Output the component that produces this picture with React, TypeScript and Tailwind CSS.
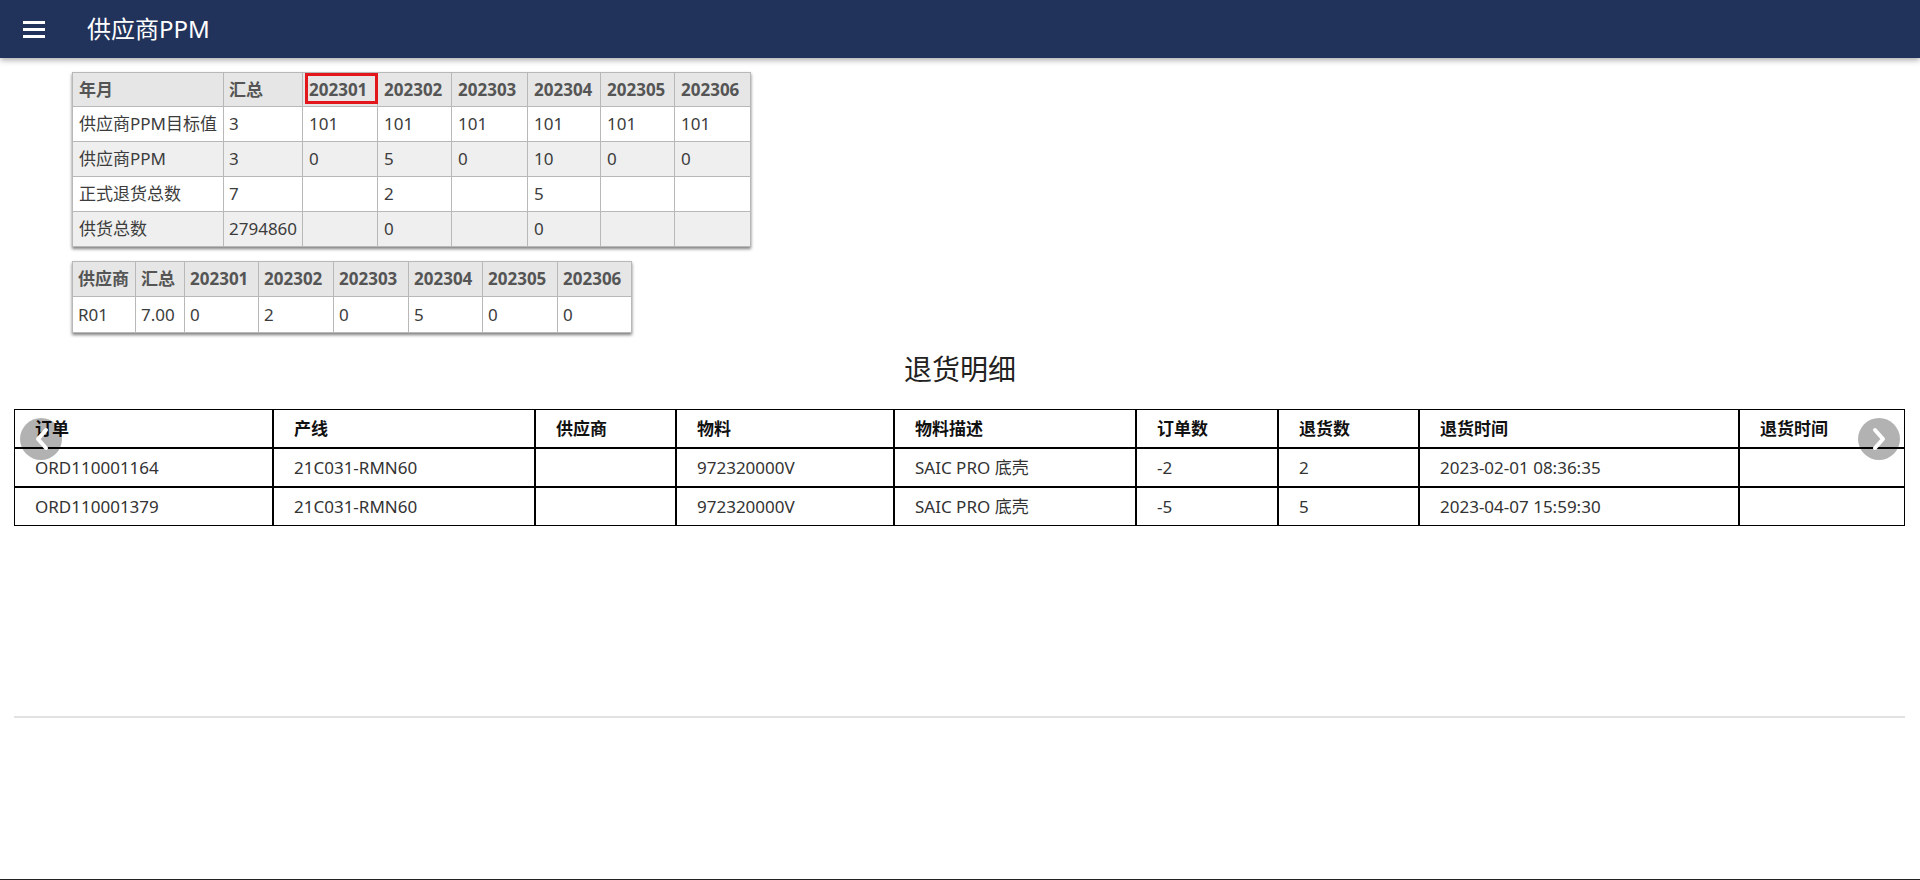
import React from 'react';

const FONT = { fontFamily: '"Noto Sans", "Noto Sans CJK SC", sans-serif' };

const months = ['202301', '202302', '202303', '202304', '202305', '202306'];

const ppmRows = [
  { label: '供应商PPM目标值', total: '3', vals: ['101', '101', '101', '101', '101', '101'] },
  { label: '供应商PPM', total: '3', vals: ['0', '5', '0', '10', '0', '0'] },
  { label: '正式退货总数', total: '7', vals: ['', '2', '', '5', '', ''] },
  { label: '供货总数', total: '2794860', vals: ['', '0', '', '0', '', ''] },
];

const details = [
  ['ORD110001164', '21C031-RMN60', '', '972320000V', 'SAIC PRO 底壳', '-2', '2', '2023-02-01 08:36:35', ''],
  ['ORD110001379', '21C031-RMN60', '', '972320000V', 'SAIC PRO 底壳', '-5', '5', '2023-04-07 15:59:30', ''],
];

const detailHeads = ['订单', '产线', '供应商', '物料', '物料描述', '订单数', '退货数', '退货时间', '退货时间'];

function Header() {
  return (
    <header className="h-[58px] bg-[#22335b] flex items-center shadow-[0_2px_6px_rgba(0,0,0,0.35)] relative z-10">
      <div className="ml-[23px] flex flex-col gap-[4px] w-[22px]">
        <span className="h-[3px] bg-white" />
        <span className="h-[3px] bg-white" />
        <span className="h-[3px] bg-white" />
      </div>
      <h1 className="ml-[42px] text-white text-[24px] leading-none">供应商PPM</h1>
    </header>
  );
}

function PpmTable() {
  const widths = ['w-[151px]', 'w-[79px]', 'w-[75px]', 'w-[74px]', 'w-[76px]', 'w-[73px]', 'w-[74px]', 'w-[76px]'];
  return (
    <table className="table-fixed w-[678px] border-collapse border border-[#9a9a9a] shadow-[0_2px_3px_rgba(0,0,0,0.5)] text-[17px]">
      <colgroup>
        {widths.map((w, i) => (
          <col key={i} className={w} />
        ))}
      </colgroup>
      <thead>
        <tr className="h-[34px] bg-[#e6e6e6] text-[#555]">
          <th className="border border-[#b8b8b8] text-left font-bold px-[6px]">年月</th>
          <th className="border border-[#b8b8b8] text-left font-bold px-[5px]">汇总</th>
          {months.map((m, i) => (
            <th key={m} className="relative border border-[#b8b8b8] text-left font-bold px-[6px]">
              {m}
              {i === 0 && <span className="absolute left-[2px] top-0 right-[-1px] bottom-[2px] border-[3px] border-[#e3161b]" />}
            </th>
          ))}
        </tr>
      </thead>
      <tbody className="text-[#3c3c3c]">
        {ppmRows.map((r, i) => (
          <tr key={r.label} className={`h-[35px] ${i % 2 === 1 ? 'bg-[#efefef]' : 'bg-white'}`}>
            <td className="border border-[#b8b8b8] px-[6px] whitespace-nowrap">{r.label}</td>
            <td className="border border-[#b8b8b8] px-[5px]">{r.total}</td>
            {r.vals.map((v, j) => (
              <td key={j} className="border border-[#b8b8b8] px-[6px]">{v}</td>
            ))}
          </tr>
        ))}
      </tbody>
    </table>
  );
}

function SupplierTable() {
  const widths = ['w-[63px]', 'w-[49px]', 'w-[74px]', 'w-[75px]', 'w-[75px]', 'w-[74px]', 'w-[75px]', 'w-[74px]'];
  const vals = ['0', '2', '0', '5', '0', '0'];
  return (
    <table className="table-fixed w-[559px] border-collapse border border-[#9a9a9a] shadow-[0_2px_3px_rgba(0,0,0,0.5)] text-[17px]">
      <colgroup>
        {widths.map((w, i) => (
          <col key={i} className={w} />
        ))}
      </colgroup>
      <thead>
        <tr className="h-[35px] bg-[#e6e6e6] text-[#555]">
          <th className="border border-[#b8b8b8] text-left font-bold px-[5px]">供应商</th>
          <th className="border border-[#b8b8b8] text-left font-bold px-[5px]">汇总</th>
          {months.map((m) => (
            <th key={m} className="border border-[#b8b8b8] text-left font-bold px-[5px]">{m}</th>
          ))}
        </tr>
      </thead>
      <tbody className="text-[#3c3c3c]">
        <tr className="h-[36px] bg-white">
          <td className="border border-[#b8b8b8] px-[5px]">R01</td>
          <td className="border border-[#b8b8b8] px-[5px]">7.00</td>
          {vals.map((v, j) => (
            <td key={j} className="border border-[#b8b8b8] px-[5px]">{v}</td>
          ))}
        </tr>
      </tbody>
    </table>
  );
}

function Arrow({ dir }: { dir: 'left' | 'right' }) {
  return (
    <div
      className={`absolute top-[9px] ${dir === 'left' ? 'left-[20px]' : 'right-[20px]'} w-[42px] h-[42px] rounded-full bg-[rgba(0,0,0,0.3)] flex items-center justify-center`}
    >
      <svg width="14" height="24" viewBox="0 0 14 24" className={dir === 'left' ? 'ml-[2px]' : 'mr-[1px]'}>
        <polyline
          points={dir === 'left' ? '11,3 3,12 11,21' : '3,3 11,12 3,21'}
          fill="none"
          stroke="white"
          strokeWidth="4"
          strokeLinecap="round"
          strokeLinejoin="round"
        />
      </svg>
    </div>
  );
}

function DetailTable() {
  const widths = ['w-[259px]', 'w-[262px]', 'w-[141px]', 'w-[218px]', 'w-[242px]', 'w-[142px]', 'w-[141px]', 'w-[320px]', 'w-[166px]'];
  return (
    <table className="table-fixed w-[1891px] border-separate border-spacing-0 text-[17px]">
      <colgroup>
        {widths.map((w, i) => (
          <col key={i} className={w} />
        ))}
      </colgroup>
      <thead>
        <tr className="h-[39px]">
          {detailHeads.map((h, i) => (
            <th key={i} className="border border-black text-left font-bold text-[#111] pl-5">{h}</th>
          ))}
        </tr>
      </thead>
      <tbody className="text-[#333]">
        {details.map((row, i) => (
          <tr key={i} className="h-[39px]">
            {row.map((c, j) => (
              <td key={j} className="border border-black pl-5 whitespace-nowrap">{c}</td>
            ))}
          </tr>
        ))}
      </tbody>
    </table>
  );
}

export default function App() {
  return (
    <div className="h-[880px] bg-white flex flex-col overflow-hidden" style={FONT}>
      <Header />
      <div className="pl-[72px] pt-[14px] flex flex-col items-start">
        <PpmTable />
        <div className="mt-[14px]">
          <SupplierTable />
        </div>
      </div>
      <div className="h-[76px] flex items-center justify-center pb-[4px]">
        <h2 className="text-[28px] leading-none text-[#222]">退货明细</h2>
      </div>
      <div className="relative h-[307px]">
        <div className="ml-[14px]">
          <DetailTable />
        </div>
        <Arrow dir="left" />
        <Arrow dir="right" />
      </div>
      <div className="ml-[14px] w-[1891px] h-[2px] bg-[#e2e2e2]" />
      <div className="mt-auto h-[1px] bg-[#222]" />
    </div>
  );
}
